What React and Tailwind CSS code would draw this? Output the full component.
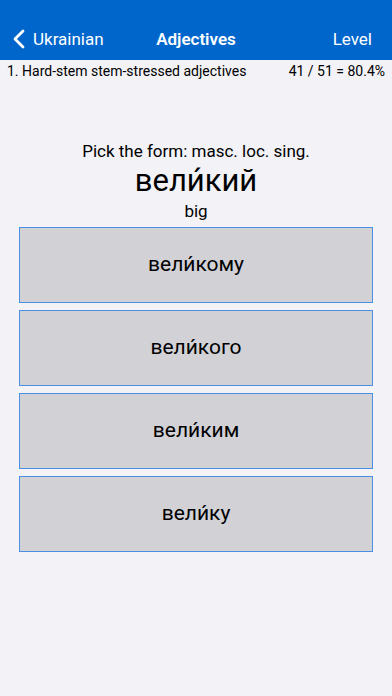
import React from 'react';

const options = ['вели́кому', 'вели́кого', 'вели́ким', 'вели́ку'];

const App = () => {
  return (
    <div
      className="min-h-[696px] w-[392px] bg-[#f2f2f7] text-black"
      style={{ fontFamily: 'Roboto, "Liberation Sans", sans-serif' }}
    >
      {/* Nav bar */}
      <div className="h-[60px] bg-[#0066cc] flex items-end pb-[8px] px-[12px] text-white text-[17px]">
        <div className="flex items-center w-[120px]">
          <svg width="14" height="20" viewBox="0 0 14 20" className="mr-[7px]">
            <path d="M11 2 L3 10 L11 18" fill="none" stroke="white" strokeWidth="2.8" strokeLinecap="round" strokeLinejoin="round" />
          </svg>
          <span>Ukrainian</span>
        </div>
        <div className="flex-1 text-center font-semibold">Adjectives</div>
        <div className="w-[120px] text-right pr-[8px]">Level</div>
      </div>

      {/* Subtitle */}
      <div className="flex justify-between px-[7px] pt-[2px] text-[14px] leading-[18px]">
        <span>1. Hard-stem stem-stressed adjectives</span>
        <span>41 / 51 = 80.4%</span>
      </div>

      {/* Prompt */}
      <div className="mt-[60px] flex flex-col items-center">
        <div className="text-[17px] leading-[22px]">Pick the form: masc. loc. sing.</div>
        <div className="text-[31px] leading-[38px]">вели́кий</div>
        <div className="text-[17px] leading-[22px]">big</div>
      </div>

      {/* Options */}
      <div className="mt-[5px] px-[19px] flex flex-col gap-[7px]">
        {options.map((o) => (
          <div
            key={o}
            className="h-[76px] border border-[#4a90e2] bg-[#d1d1d6] flex items-center justify-center text-[21px]"
          >
            {o}
          </div>
        ))}
      </div>
    </div>
  );
};

export default App;
